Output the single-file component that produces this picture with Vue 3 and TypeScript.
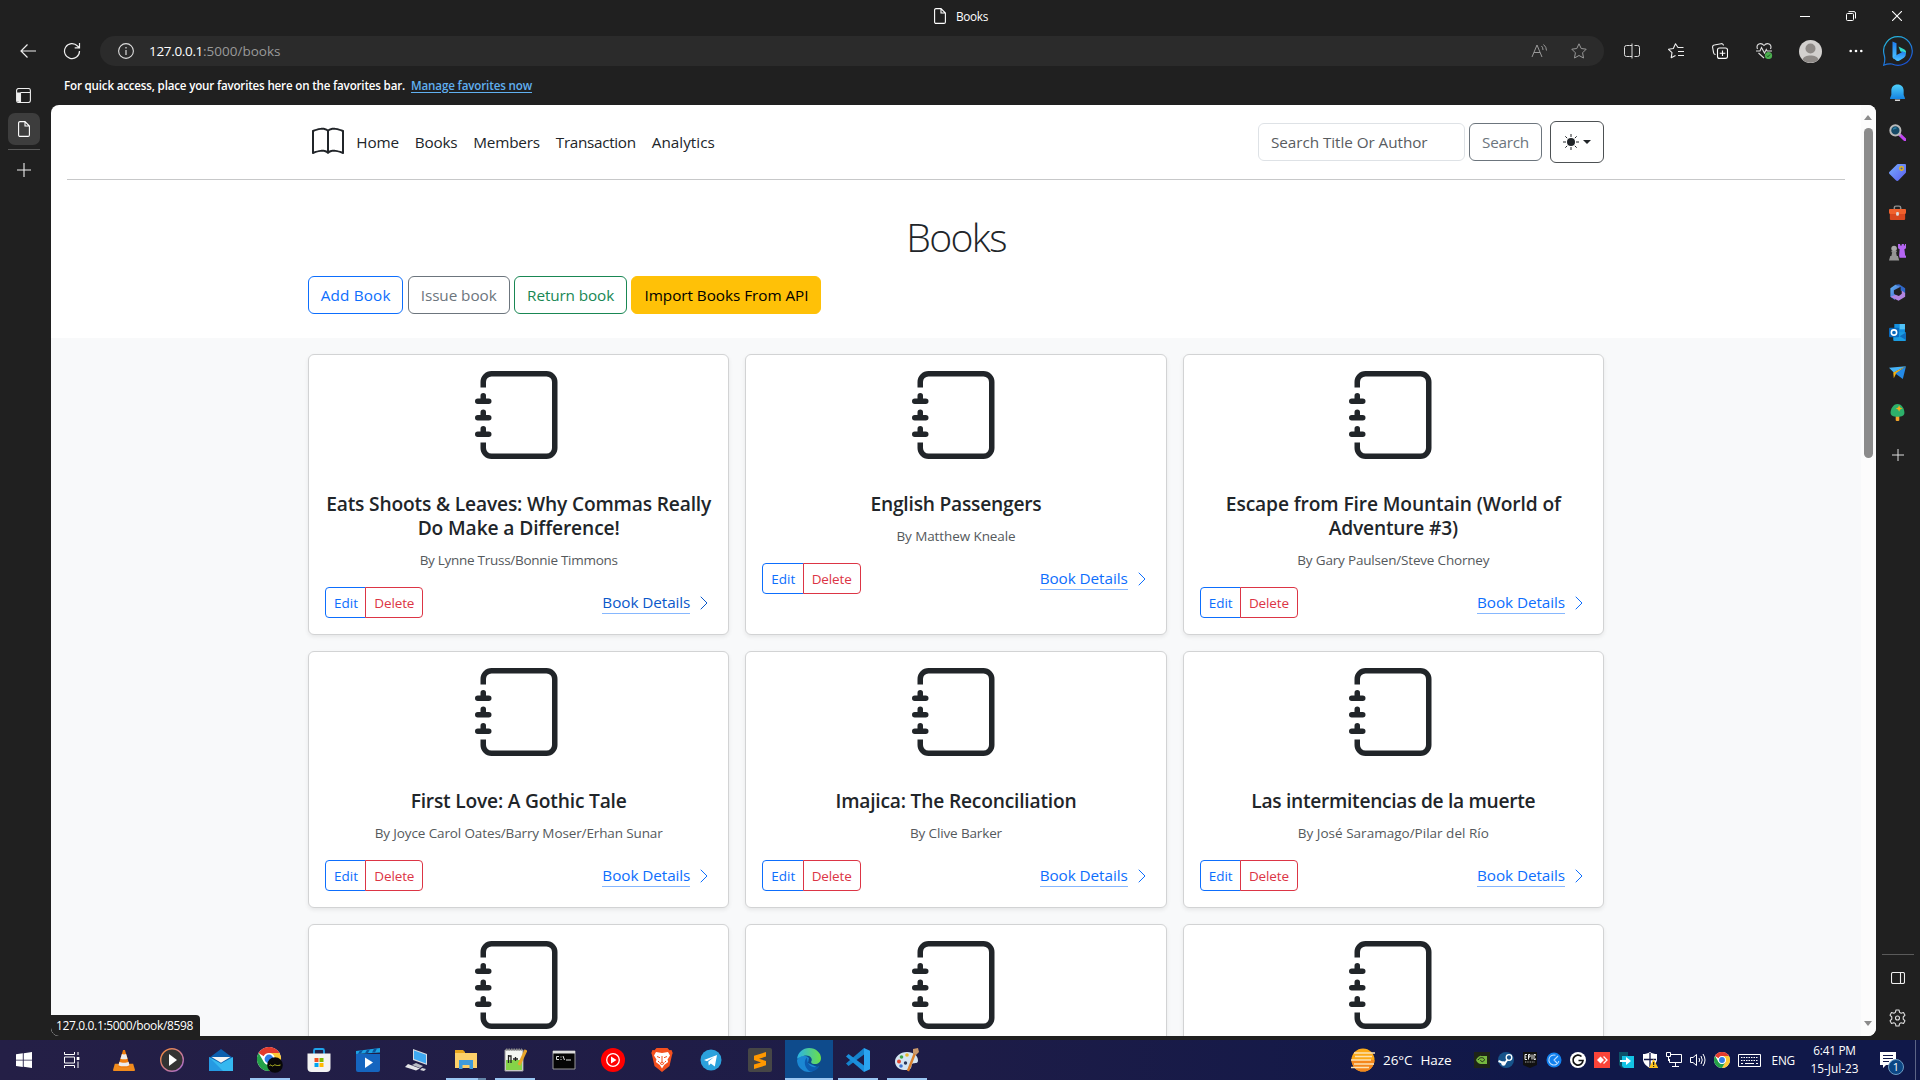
<script setup lang="ts">
interface Book {
  title: [string, number][]
  author: string
  authorWidth: number
  hovered?: boolean
}

interface Glyph {
  name: string
  box: string
  size: number
  state?: string
}

// Spreads the letters of a label so that it takes exactly the given width.
const vFit = {
  mounted(el: HTMLElement, binding: { value: number }) {
    const range = document.createRange()
    range.selectNodeContents(el)
    const natural = range.getBoundingClientRect().width
    const count = (el.textContent ?? '').length
    el.style.letterSpacing = `${(binding.value - natural) / count}px`
  },
}

const books: Book[] = [
  {
    title: [['Eats Shoots & Leaves: Why Commas Really', 385], ['Do Make a Difference!', 202]],
    author: 'By Lynne Truss/Bonnie Timmons',
    authorWidth: 198,
    hovered: true,
  },
  { title: [['English Passengers', 171]], author: 'By Matthew Kneale', authorWidth: 119 },
  {
    title: [['Escape from Fire Mountain (World of', 335], ['Adventure #3)', 129]],
    author: 'By Gary Paulsen/Steve Chorney',
    authorWidth: 192,
  },
  { title: [['First Love: A Gothic Tale', 216]], author: 'By Joyce Carol Oates/Barry Moser/Erhan Sunar', authorWidth: 288 },
  { title: [['Imajica: The Reconciliation', 241]], author: 'By Clive Barker', authorWidth: 92 },
  { title: [['Las intermitencias de la muerte', 284]], author: 'By José Saramago/Pilar del Río', authorWidth: 191 },
]

// Cards below the fold, of which only the cover is in view.
const partialCards = 3

const navLinks: [string, number][] = [
  ['Home', 42.5],
  ['Books', 42.5],
  ['Members', 66.5],
  ['Transaction', 80],
  ['Analytics', 63],
]

const chromeLogo =
  '<circle cx="12" cy="12" r="12" fill="#fff"/><path d="M1.6 6A12 12 0 0 1 22.4 6H12a6 6 0 0 0-5.3 3.2z" fill="#e33b2e"/><path d="M22.4 6A12 12 0 0 1 12 24l5.2-9A6 6 0 0 0 12 6z" fill="#fcc934"/><path d="M1.6 6A12 12 0 0 0 12 24l5.2-9A6 6 0 0 1 6.8 15z" fill="#24a148"/><circle cx="12" cy="12" r="5.6" fill="#fff"/><circle cx="12" cy="12" r="4.4" fill="#2f7de9"/>'

const icons: Record<string, string> = {
  bell: '<defs><linearGradient id="bl" x2="0" y2="1"><stop stop-color="#4fd0fb"/><stop offset="1" stop-color="#1583e0"/></linearGradient></defs><path d="M5.500 14.500h5a2.500 2.500 0 0 1-5 0z" fill="#d8d8d8"/><path d="M8 .5c-3.600 0-5.800 2.500-5.800 5.600v4.200L1 13.200V14h14v-.8l-1.200-2.900V6.100C13.800 3 11.600.5 8 .5z" fill="url(#bl)"/>',
  magnifier: '<path d="M10 10l5 4.800" stroke="#c044f0" stroke-width="3" stroke-linecap="round"/><path d="M9.500 9.500l1.500 1.500" stroke="#aaa" stroke-width="1.500"/><circle cx="6" cy="6" r="4.800" fill="#164a66" stroke="#b9b9b9" stroke-width="1.800"/><path d="M4 5a2.500 2.500 0 0 1 3-1" stroke="#2c83ad" stroke-width="1.300" fill="none"/>',
  tag: '<defs><linearGradient id="tg" y2="1"><stop stop-color="#77aefc"/><stop offset="1" stop-color="#5a5cf0"/></linearGradient></defs><path d="M8.500 0H15a1 1 0 0 1 1 1v6.500a2 2 0 0 1-.6 1.300l-6.600 6.700a1.500 1.500 0 0 1-2.100 0L.5 9.300a1.500 1.500 0 0 1 0-2.100L7.200.6A2 2 0 0 1 8.500 0z" fill="url(#tg)"/><circle cx="11.800" cy="4.200" r="2.300" fill="#e8b710"/><circle cx="11.800" cy="4.200" r="1" fill="#4059c4"/>',
  toolbox: '<path d="M5 5V3.500A1.500 1.500 0 0 1 6.500 2h3A1.500 1.500 0 0 1 11 3.500V5" fill="none" stroke="#8f8f8f" stroke-width="1.400"/><path d="M.8 9h14.400v5a1 1 0 0 1-1 1H1.800a1 1 0 0 1-1-1z" fill="#d9481f"/><path d="M.8 4.800h14.400a.8.8 0 0 1 .8.800v2.400c0 1-.8 1.400-1.600 1.400H1.600C.8 9.400 0 9 0 8V5.600a.8.8 0 0 1 .8-.8z" fill="#f0612d"/><rect x="6.700" y="7.500" width="2.600" height="3.500" rx="1" fill="#ddd"/>',
  chess: '<circle cx="4.800" cy="4.300" r="2.600" fill="#a8a8a8"/><path d="M2.300 6.300h5v1.500H6.600l.9 4H2.100l.9-4h-.7zM1.200 11.300h7.200l1.200 4.200H0z" fill="#949494"/><path d="M8.500 0h2v1.500h1.500V0h2v1.500h1V0h1v4l-1.500 1 .7 5.500 1 1V13H10L9.500 11 10 5 8.500 4z" fill="#b565f3"/>',
  office: '<defs><linearGradient id="of" y2="1"><stop stop-color="#5fb8f5"/><stop offset="1" stop-color="#4453c9"/></linearGradient></defs><path d="M6 .8 9.500.3 15.200 4v5l-4.200-3V3z" fill="#2e66c8"/><path d="M6 .8 1.300 4v8l4.300 3 .8-4.500L4.600 9V5.800L11 2.500z" fill="url(#of)"/><path d="M15.200 8.500V12L9 15.700 1.300 12l5-2 3 1.200 2.700-2V6z" fill="#b185e0"/>',
  outlook: '<path d="M5 0h10v9H5z" fill="#1490df"/><path d="M10 0h5v5h-5z" fill="#50c2f7"/><path d="M4 7l12 1v7a1 1 0 0 1-1 1H5a1 1 0 0 1-1-1z" fill="#1b9de2"/><path d="M16 8v7l-6-3.500z" fill="#0e6dbd"/><rect y="3.500" width="9.500" height="9" rx="1" fill="#0869bd"/><circle cx="4.700" cy="8" r="2.500" fill="none" stroke="#fff" stroke-width="1.500"/>',
  plane: '<path d="M0 3.500 16 2 4.500 8z" fill="#46b3f7"/><path d="M16 2 4 8l.5 5.500 2-4z" fill="#f6b211"/><path d="M16 2 6 9l7 5z" fill="#2389e6"/>',
  tree: '<rect x="6.300" y="11" width="3.400" height="5" rx="1" fill="#f2a52b"/><path d="M8 0c4 0 6.500 4.500 6.500 8.300 0 2.700-2 3.700-6.500 3.700s-6.500-1-6.500-3.700C1.500 4.500 4 0 8 0z" fill="#2db06b"/><path d="m9.500 1.200.9 2.200 2.200.9-2.200.9-.9 2.200-.9-2.200-2.200-.9 2.200-.9z" fill="#f7ad1d"/>',
  // taskbar
  windows: '<path d="M0 2.300 6.800 1.300V7.700H0zM7.700 1.200 16 0v7.700H7.700zM0 8.600h6.800V15L0 14zM7.700 8.600H16V16l-8.300-1.200z" fill="#fff"/>',
  taskview: '<g fill="none" stroke="#fff" stroke-width="1"><path d="M.5 0v2.500h10V0M.5 16v-2.500h10V16M.5 5h10v6H.5zM14 0v3M14 9.500V16"/></g><path d="M12.700 5h2.700v3h-2.700z" fill="#fff"/>',
  vlc: '<path d="M2 16h20l2 7a1 1 0 0 1-1 1H1a1 1 0 0 1-1-1z" fill="#f18b1c"/><path d="M11 1h2l5.500 18c-2 2-11 2-13 0z" fill="#f07d0c"/><path d="m9.700 5.500-1.600 5c2 1 5.800 1 7.800 0l-1.600-5c-1 .6-3.600.6-4.600 0zM7 14l-1 3.600c3 1.700 9 1.700 12 0L17 14c-2.500 1.500-7.500 1.500-10 0z" fill="#ececec"/>',
  media: '<defs><linearGradient id="md" y2="1"><stop stop-color="#f58b34"/><stop offset="1" stop-color="#a56bd8"/></linearGradient></defs><circle cx="12" cy="12" r="11.300" fill="#333" stroke="url(#md)" stroke-width="1.400"/><path d="m9 6 8 6-8 6z" fill="#fff"/>',
  mail: '<path d="m0 10 12-9 12 9v5H0z" fill="#0c5fae"/><path d="M0 9 12 15.500 24 9v14H0z" fill="#35b8f0"/><path d="M0 9 14 23H0z" fill="#1a86d8" opacity=".6"/><path d="M2.500 9h19L12 14.800z" fill="#f4f4f4"/>',
  chrome: chromeLogo + '<circle cx="18" cy="18" r="7.800" fill="#080808"/><path d="M12.500 18.500q1-1 2 0t2 0 2-.5 2 .5 3-.5" stroke="#c4c926" fill="none"/>',
  chromeSmall: chromeLogo,
  store: '<path d="M7 6V2.500A1.500 1.500 0 0 1 8.500 1h7A1.500 1.500 0 0 1 17 2.500V6" fill="none" stroke="#1fa3ea" stroke-width="1.800"/><path d="M.5 5.500h23V20a4 4 0 0 1-4 4h-15a4 4 0 0 1-4-4z" fill="#f3f3f3"/><path d="M7.500 10h4v4h-4z" fill="#f25022"/><path d="M12.500 10h4v4h-4z" fill="#7fba00"/><path d="M7.500 15h4v4h-4z" fill="#00a4ef"/><path d="M12.500 15h4v4h-4z" fill="#ffb900"/>',
  movies: '<path d="M0 6h24v16a2 2 0 0 1-2 2H2a2 2 0 0 1-2-2z" fill="#1565bf"/><path d="M0 3 24 0v4.500L0 6z" fill="#1ca2e4"/><path d="m4 2.500 3-.4-2 3.500-3 .2zM11 1.700l3-.4-2 3.700-3 .2zM18 .8l3-.4-2 4-3 .2z" fill="#0c549d"/><path d="m9 9.500 8 5-8 5.500z" fill="#fff"/>',
  desktop: '<path d="m8 1 14 5v11L8 12z" fill="#d8dbe0"/><path d="m9 2.500 12 4.300v8.700L9 11z" fill="#3fa9f1"/><path d="m11 15 7 3-3 2-8-3z" fill="#b9bcc2"/><path d="m3 16 12 4.500-4 2L0 19z" fill="#e5e6e9"/><path d="m17 20 4 1-2 2-4-1z" fill="#d4d6da"/>',
  explorer: '<path d="M1 2h8l2 2v4H1z" fill="#e9a61c"/><path d="M1 5h22v15H1z" fill="#fdd069"/><path d="M5 12h14v9h-3.500v-4h-7v4H5z" fill="#3f9bdc"/>',
  notepadpp: '<path d="M2 2h18v21H2z" fill="#f5f7f3" stroke="#999"/><path d="M3 12h16v10H3z" fill="#85d348"/><path d="M3 1.500h16" stroke="#888" stroke-width="2" stroke-dasharray="1.500 1"/><path d="M5.500 7v8M5.500 8H8v7M10 11h5M12.500 9v4" stroke="#222" stroke-width="1.300" fill="none"/><path d="m23 2-7 15" stroke="#e8a629" stroke-width="3"/>',
  cmd: '<path d="M1 3h22v18H1z" fill="#050505" stroke="#999"/><path d="M1 3h22v2.500H1z" fill="#ddd"/><path d="M7 8.500H4.500v3H7M9 8.500v1M9 11v1M11 8l1.500 4M14 12h5" stroke="#ddd" fill="none"/>',
  ytmusic: '<circle cx="12" cy="12" r="12" fill="#f00"/><circle cx="12" cy="12" r="6.300" fill="none" stroke="#fff" stroke-width="1.300"/><path d="m10 8.500 5.500 3.500-5.500 3.500z" fill="#fff"/>',
  brave: '<path d="M6.500 0h11l2 2.200 2-.3 1.200 3-.7 2-2.500 11L12 24l-7.500-6.100L2 7l-.7-2 1.200-3 2 .3z" fill="#f4501e"/><path d="m6 4 6 1 6-1 2 3.500-2.500 4 .7 2.500-4 3L12 20.500 9.800 17l-4-3 .7-2.500L4 7.500z" fill="#fff"/><path d="m7 8.500 3 1.200M17 8.500l-3 1.200M12 8v6l-2 1.500 2 1 2-1-2-1.500M8 13l1.500 1.500M16 13l-1.500 1.500" stroke="#f4501e" stroke-width="1" fill="none"/>',
  telegram: '<circle cx="12" cy="12" r="10.500" fill="#2ba1dc"/><path d="m5 12 13-5-2.200 11.500-4-3-2 2-.6-3.700L15 9l-7 4.200z" fill="#fff"/>',
  sublime: '<rect width="24" height="24" rx="2" fill="#464646"/><path d="M18 4v4.500l-7 2.200 7 2.300v4.300l-12 3.800v-4.500l7-2.200-7-2.300V7.800z" fill="#ff9800"/>',
  edge: '<defs><linearGradient id="ed" x1="0" y1=".5" x2="1" y2=".5"><stop stop-color="#2bb2e8"/><stop offset="1" stop-color="#6be048"/></linearGradient></defs><path d="M0 12c2-4 8-6 12-2l-1 5 9 4c-2 3-5 5-8 5A12 12 0 0 1 0 12z" fill="#1b87d3"/><path d="M0 11C1 4 6 0 12 0c7 0 12 5 12 10 0 4-3 6-6 6-3.500 0-4.500-1.500-3.500-3 1.200-2-1-5.500-5-5.500C5 7.500 1 10 0 11z" fill="url(#ed)"/><path d="M10 9.500c-4 3-2.500 12 4 14.300 4-.5 7-3 8.500-6-6 3.500-12.500.5-12.500-8.300z" fill="#0d5cb0"/>',
  vscode: '<path d="m18 0 6 2.700v18.600L18 24z" fill="#2aa4f0"/><path d="M18 0 0 15.500 2.500 18 18 6.500z" fill="#1583cd"/><path d="M18 24 0 8.500 2.500 6 18 17.500z" fill="#1b8fdc"/>',
  paint: '<path d="M12 4c7 0 11 4 11 8.500 0 3-3 2.500-5 3s-1 2.500-2 4.500-4 2-7 2C4 22 0 18 0 13.500S5 4 12 4z" fill="#d4e5f2"/><circle cx="6.500" cy="9" r="1.800" fill="#3da648"/><circle cx="12" cy="7" r="1.800" fill="#e9b72c"/><circle cx="4" cy="13.500" r="2" fill="#e2472f"/><circle cx="6" cy="18" r="1.800" fill="#3d73cf"/><circle cx="10.500" cy="15" r="1.700" fill="#26375b"/><path d="m20 5-7 18" stroke="#d9802c" stroke-width="2.400"/><path d="m18 1 5-1 1 4-3 3-3-2z" fill="#c9986b"/>',
  weather: '<circle cx="12" cy="12" r="11.500" fill="#fba919"/><path d="M12 23.500A11.500 11.500 0 0 1 .5 12h23A11.500 11.500 0 0 1 12 23.500z" fill="#f5871c"/><path d="M3 5h21M0 12h20M4 8.500h17M3 16h20M0 19.500h18" stroke="#fbe2b2" stroke-width="1.500"/>',
  nvidia: '<path d="M0 0h16v16H0z" fill="#1d2418"/><path d="M2 8c2-3.500 4-4 5-4.200V4h6v8H7C5 12 3 10.500 2 8z" fill="#76b83f"/><path d="M4 8c1.500-3 5.500-3 6.500-.5C9.500 10.500 7 10 6.500 8" stroke="#1d2418" fill="none"/>',
  steam: '<circle cx="8" cy="8" r="8" fill="#16538a"/><path d="M.5 9l6 2.500L10 7" stroke="#fff" stroke-width="2" fill="none"/><circle cx="11" cy="5.500" r="2.800" fill="#16538a" stroke="#fff" stroke-width="1.300"/><circle cx="5.500" cy="11.500" r="2.200" fill="#fff"/>',
  epic: '<path d="M1 0h14v13l-7 3-7-3z" fill="#111"/><path d="M5 2.500H3v5h2M3 5h1.500M6.500 7.500v-5h1.500v2.500H6.500M10 2.500v5M13.500 3.500v-1H12v5h1.500v-1" stroke="#eee" fill="none"/><path d="M3 10h10" stroke="#aaa" stroke-dasharray="1 .7"/>',
  clock: '<circle cx="8" cy="8" r="7.500" fill="#1180ee"/><path d="M9.500 3.300a5 5 0 1 0 3.300 5.700M12 4 8 8l3 3" fill="none" stroke="#bcdcff" stroke-width="1.100"/>',
  logi: '<circle cx="8" cy="8" r="8" fill="#fff"/><path d="M11.500 4.500A5 5 0 1 0 13 8.500H8.500" fill="none" stroke="#111" stroke-width="1.700"/>',
  anydesk: '<path d="M0 0h16v16H0z" fill="#fb4439"/><path d="m3 8 3.500-3.500L10 8l-3.500 3.500z" fill="#fff"/><path d="m9.500 4.500 3.500 3.500-3.500 3.500" stroke="#fff" stroke-width="1.300" fill="none"/>',
  transfer: '<path d="M1 0h9v16H4L1 13z" fill="#0b5168"/><path d="M4 4h12v12H6l-2-2z" fill="#13c3e4"/><path d="M2 8h6V5l5 4-5 4v-3H2z" fill="#fff"/>',
  shield: '<path d="M8 0c2 1.500 4.500 2 7 2v5c0 4-3 7-7 9-4-2-7-5-7-9V2c2.500 0 5-.5 7-2z" fill="#fff"/><path d="M8 1v14M2 7.500h12" stroke="#13184a" stroke-width="1.300"/><path d="m11.500 7 4.700 9H7z" fill="#fcc21c"/><path d="M11.600 10v3M11.600 14v1" stroke="#222" stroke-width="1.200"/>',
  network: '<g fill="none" stroke="#fff"><path d="M5 2.500h10.500v8H3.500V7M9.500 10.500v3.500M6 14.500h7M.5.5h4v4h-4zM2.500 4.500V9"/></g>',
  speaker: '<g fill="none" stroke="#fff"><path d="M.5 5.500H3l3.500-3v11l-3.500-3H.5zM9 6q1.200 2 0 4M11 4q2.500 4 0 8M13 2q4 6 0 12"/></g>',
  journal: '<path d="M3 0h10a2 2 0 0 1 2 2v12a2 2 0 0 1-2 2H3a2 2 0 0 1-2-2v-1h1v1a1 1 0 0 0 1 1h10a1 1 0 0 0 1-1V2a1 1 0 0 0-1-1H3a1 1 0 0 0-1 1v1H1V2a2 2 0 0 1 2-2z"/><path d="M1 5v-.5a.5.5 0 0 1 1 0V5h.5a.5.5 0 0 1 0 1h-2a.5.5 0 0 1 0-1H1zm0 3v-.5a.5.5 0 0 1 1 0V8h.5a.5.5 0 0 1 0 1h-2a.5.5 0 0 1 0-1H1zm0 3v-.5a.5.5 0 0 1 1 0v.5h.5a.5.5 0 0 1 0 1h-2a.5.5 0 0 1 0-1H1z"/>',
}

const sidebarApps = ['bell', 'magnifier', 'tag', 'toolbox', 'chess', 'office', 'outlook', 'plane', 'tree']

const taskApps: Glyph[] = [
  { name: 'vlc', box: '0 0 24 24', size: 22 },
  { name: 'media', box: '0 0 24 24', size: 24 },
  { name: 'mail', box: '0 0 24 24', size: 24 },
  { name: 'chrome', box: '0 0 26 26', size: 26, state: 'open' },
  { name: 'store', box: '0 0 24 24', size: 24 },
  { name: 'movies', box: '0 0 24 24', size: 24 },
  { name: 'desktop', box: '0 0 24 24', size: 24 },
  { name: 'explorer', box: '0 0 24 24', size: 24, state: 'stacked' },
  { name: 'notepadpp', box: '0 0 24 24', size: 24, state: 'open' },
  { name: 'cmd', box: '0 0 24 24', size: 24 },
  { name: 'ytmusic', box: '0 0 24 24', size: 24 },
  { name: 'brave', box: '0 0 24 24', size: 24 },
  { name: 'telegram', box: '0 0 24 24', size: 24 },
  { name: 'sublime', box: '0 0 24 24', size: 24 },
  { name: 'edge', box: '0 0 24 24', size: 24, state: 'active' },
  { name: 'vscode', box: '0 0 24 24', size: 24, state: 'open' },
  { name: 'paint', box: '0 0 24 24', size: 24, state: 'open' },
]

const trayApps = ['nvidia', 'steam', 'epic', 'clock', 'logi', 'anydesk', 'transfer', 'shield', 'network', 'speaker']
</script>

<template>
  <div class="screen">
    <header class="titlebar">
      <div class="tab-title">
        <svg width="12" height="16" viewBox="0 0 12 16"><path d="M.6 2A1.400 1.400 0 0 1 2 .6h5L11.400 5v9a1.400 1.400 0 0 1-1.400 1.400H2A1.400 1.400 0 0 1 .6 14zM7 .6V5h4.400" fill="none" stroke="#fff" stroke-width="1.100" /></svg>
        <span v-fit="32">Books</span>
      </div>
      <div class="window-buttons">
        <svg width="10" height="10" viewBox="0 0 10 10"><path d="M0 5.500h10" stroke="#fff" /></svg>
        <svg width="10" height="10" viewBox="0 0 10 10"><path d="M.5 3.500a1 1 0 0 1 1-1h5a1 1 0 0 1 1 1v5a1 1 0 0 1-1 1h-5a1 1 0 0 1-1-1zM2.500.6H8A1.500 1.500 0 0 1 9.500 2v5.500" fill="none" stroke="#fff" /></svg>
        <svg width="10" height="10" viewBox="0 0 10 10"><path d="m0 0 10 10M10 0 0 10" stroke="#fff" stroke-width="1.100" /></svg>
      </div>
    </header>

    <div class="toolbar">
      <svg class="back" width="16" height="14" viewBox="0 0 16 14"><path d="M16 7H1M7.500.5 1 7l6.500 6.500" fill="none" stroke="#eee" stroke-width="1.200" /></svg>
      <svg class="reload" width="18" height="18" viewBox="0 0 18 18"><path d="M16.500 9A7.500 7.500 0 1 1 14.500 4L16.200 5.500M16.500 1v4.800h-4.800" fill="none" stroke="#eee" stroke-width="1.200" /></svg>
      <div class="address">
        <svg width="16" height="16" viewBox="0 0 16 16"><circle cx="8" cy="8" r="7.400" fill="none" stroke="#ddd" stroke-width="1.100" /><path d="M8 7v5M8 4v1.400" stroke="#ddd" stroke-width="1.200" /></svg>
        <span v-fit="54" class="host">127.0.0.1</span><span v-fit="77.5" class="path">:5000/books</span>
        <div class="address-tools">
          <svg width="17" height="16" viewBox="0 0 17 16"><path d="M1 14 6 2l5 12M3 9.500h6M10.500 3q1.500 1.500 1.500 4M12.500 1.500q3 2.500 3 6" fill="none" stroke="#999" /></svg>
          <svg width="16" height="16" viewBox="0 0 16 16"><path d="m8 .8 2.200 4.700 5 .7-3.600 3.600.9 5.200L8 12.500 3.500 15l.9-5.200L.8 6.200l5-.7z" fill="none" stroke="#999" stroke-linejoin="round" /></svg>
        </div>
      </div>
      <div class="tools">
        <svg width="16" height="16" viewBox="0 0 16 16"><path d="M5.500 2.500h-3a2 2 0 0 0-2 2v7a2 2 0 0 0 2 2h3M10.500 2.500h3a2 2 0 0 1 2 2v7a2 2 0 0 1-2 2h-3M5.500 2.500H8M5.500 13.500H8M8 .5v15" fill="none" stroke="#ddd" /></svg>
        <svg width="16" height="16" viewBox="0 0 16 16"><path d="M15.500 4.500H10L7.500.8 5.300 5.500l-4.800.8L4 9.700l-.8 5 4.300-2.300M10 8.500h6M10 12.500h6" fill="none" stroke="#eee" stroke-width="1.100" stroke-linejoin="round" /></svg>
        <svg width="16" height="16" viewBox="0 0 16 16"><path d="M11.500 2.500A2 2 0 0 0 9.200.7L2.300 2A2 2 0 0 0 .6 4.400l1 5.400q.4 1.600 2 1.700" fill="none" stroke="#eee" stroke-width="1.100" /><rect x="5.500" y="5" width="10" height="10.400" rx="2" fill="none" stroke="#fff" stroke-width="1.100" /><path d="M10.500 7.500v5.500M7.700 10.200h5.600" stroke="#fff" stroke-width="1.100" /></svg>
        <svg width="17" height="16" viewBox="0 0 17 16"><path d="M1.500 6C-.5 1 5-1 8 2.500 11-1 16.500 1 14.500 6M0 8h4l1.500-3.500L8.500 10l1.800-3.500.8 1.500H16M2.500 10 8 15" fill="none" stroke="#ddd" stroke-width="1.100" /><circle cx="12.500" cy="12.500" r="3.600" fill="#4caf50" /><path d="m11 12.700 1 1 2-2.200" stroke="#14501a" fill="none" /></svg>
        <svg class="avatar" width="23" height="23" viewBox="0 0 23 23"><circle cx="11.500" cy="11.500" r="11.500" fill="#d2d0ce" /><circle cx="11.500" cy="8.500" r="5" fill="#8e8a87" /><path d="M3.500 19.500c1.500-5.500 14.500-5.500 16 0a11.500 11.500 0 0 1-16 0z" fill="#8e8a87" /></svg>
        <svg class="more" width="14" height="4" viewBox="0 0 14 4"><g fill="#fff"><circle cx="1.700" cy="2" r="1.300" /><circle cx="7" cy="2" r="1.300" /><circle cx="12.300" cy="2" r="1.300" /></g></svg>
        <svg class="bing" width="30" height="30" viewBox="0 0 30 30">
          <defs>
            <linearGradient id="ring" x1="0" y1="0" x2=".6" y2="1"><stop stop-color="#27c3dc" /><stop offset="1" stop-color="#1a55d8" /></linearGradient>
            <linearGradient id="bee" x1="0" y1="0" x2="0" y2="1"><stop stop-color="#1e7cf0" /><stop offset="1" stop-color="#4cc5ff" /></linearGradient>
          </defs>
          <path d="M15 .7A14.300 14.300 0 1 1 9 28q-4-.6-8.300 1.200Q2.600 24 1.200 19A14.300 14.300 0 0 1 15 .7z" fill="none" stroke="url(#ring)" stroke-width="1.200" />
          <path d="m9.500 5.500 4 1.700v14l-2.500 2-1.500-2z" fill="url(#bee)" />
          <path d="m15.500 10.500 6 3q2 1 1.500 3.500l-5.500-1.500z" fill="#35dcc9" />
          <path d="m9.700 21.500 3.800 3.300q1.500.6 3-.3l4.500-2.800q2-1.500 2-4.700l-4-2-.5 1.500-5 2.500z" fill="url(#bee)" />
        </svg>
      </div>
    </div>

    <div class="main">
      <aside class="tabs">
        <svg class="tabs-toggle" width="15" height="15" viewBox="0 0 15 15"><path d="M.6 2.500a2 2 0 0 1 2-2h9.800a2 2 0 0 1 2 2v10a2 2 0 0 1-2 2H2.600a2 2 0 0 1-2-2zM4.500 4.500h10M4.500 4.500v10" fill="none" stroke="#eee" stroke-width="1.100" /><path d="M1 4.500h3v10L1 13z" fill="#eee" /></svg>
        <div class="tab">
          <svg width="12" height="16" viewBox="0 0 12 16"><path d="M.6 2A1.400 1.400 0 0 1 2 .6h5L11.400 5v9a1.400 1.400 0 0 1-1.400 1.400H2A1.400 1.400 0 0 1 .6 14zM7 .6V5h4.400" fill="none" stroke="#fff" stroke-width="1.100" /></svg>
        </div>
        <div class="rule"></div>
        <svg class="new-tab" width="14" height="14" viewBox="0 0 14 14"><path d="M7 0v14M0 7h14" stroke="#eee" stroke-width="1.100" /></svg>
      </aside>

      <div class="center">
        <div class="favorites">
          <span v-fit="341">For quick access, place your favorites here on the favorites bar.</span>
          <a v-fit="121">Manage favorites now</a>
        </div>

        <div class="viewport">
          <div class="page">
            <nav class="container navbar">
              <svg class="logo" width="32" height="32" viewBox="0 0 16 16" fill="#212529"><path d="M1 2.828c.885-.37 2.154-.769 3.388-.893 1.330-.134 2.458.063 3.112.752v9.746c-.935-.53-2.120-.603-3.213-.493-1.180.12-2.370.461-3.287.811V2.828zm7.500-.141c.654-.689 1.782-.886 3.112-.752 1.234.124 2.503.523 3.388.893v9.923c-.918-.35-2.107-.692-3.287-.81-1.094-.111-2.278-.039-3.213.492V2.687zM8 1.783C7.015.936 5.587.81 4.287.94c-1.514.153-3.042.672-3.994 1.105A.5.5 0 0 0 0 2.500v11a.5.5 0 0 0 .707.455c.882-.4 2.303-.881 3.680-1.020 1.409-.142 2.590.087 3.223.877a.5.5 0 0 0 .78 0c.633-.79 1.814-1.019 3.222-.877 1.378.139 2.800.62 3.681 1.020A.5.5 0 0 0 16 13.500v-11a.5.5 0 0 0-.293-.455c-.952-.433-2.480-.952-3.994-1.105C10.413.809 8.985.936 8 1.783z" /></svg>
              <a v-for="[label, width] in navLinks" :key="label" v-fit="width" class="nav-link">{{ label }}</a>
              <div class="search">
                <input type="text" placeholder="Search Title Or Author" />
                <button class="btn gray"><span v-fit="47">Search</span></button>
                <button class="btn theme">
                  <svg width="16" height="16" viewBox="0 0 16 16"><circle cx="8" cy="8" r="4" fill="#212529" /><path d="M8 0v3M8 13v3M0 8h3M13 8h3M2.300 2.300l1.900 1.900M11.800 11.800l1.900 1.900M2.300 13.700l1.900-1.900M11.800 4.200l1.900-1.900" stroke="#212529" /></svg>
                  <i></i>
                </button>
              </div>
            </nav>
            <hr />

            <section class="container intro">
              <h1><span v-fit="99.5">Books</span></h1>
              <div class="actions">
                <button class="btn blue"><span v-fit="70">Add Book</span></button>
                <button class="btn gray"><span v-fit="76">Issue book</span></button>
                <button class="btn green"><span v-fit="87">Return book</span></button>
                <button class="btn yellow"><span v-fit="164">Import Books From API</span></button>
              </div>
            </section>

            <section class="shelf">
              <div class="container grid">
                <article v-for="book in books" :key="book.author" class="card">
                  <svg class="cover" width="88" height="88" viewBox="0 0 16 16" fill="#212529" v-html="icons.journal"></svg>
                  <h5>
                    <div v-for="[line, width] in book.title" :key="line"><span v-fit="width">{{ line }}</span></div>
                  </h5>
                  <p><span v-fit="book.authorWidth">{{ book.author }}</span></p>
                  <div class="card-foot">
                    <div class="group">
                      <button class="edit"><span v-fit="24">Edit</span></button>
                      <button class="delete"><span v-fit="40">Delete</span></button>
                    </div>
                    <a class="details" :class="{ hovered: book.hovered }">
                      <span v-fit="88">Book Details</span>
                      <svg width="8" height="14" viewBox="0 0 8 14"><path d="m1 1 6 6-6 6" fill="none" stroke="currentColor" stroke-linecap="round" /></svg>
                    </a>
                  </div>
                </article>
                <article v-for="n in partialCards" :key="n" class="card">
                  <svg class="cover" width="88" height="88" viewBox="0 0 16 16" fill="#212529" v-html="icons.journal"></svg>
                </article>
              </div>
            </section>
          </div>
          <div class="scrollbar">
            <i class="up"></i>
            <div class="thumb"></div>
            <i class="down"></i>
          </div>
          <div class="status"><span v-fit="137">127.0.0.1:5000/book/8598</span></div>
        </div>
      </div>

      <aside class="apps">
        <div v-for="name in sidebarApps" :key="name" class="app">
          <svg width="17" height="17" viewBox="0 0 16 16" v-html="icons[name]"></svg>
        </div>
        <svg class="add" width="12" height="12" viewBox="0 0 12 12"><path d="M6 0v12M0 6h12" stroke="#ddd" /></svg>
        <div class="rule"></div>
        <svg class="panel" width="14" height="12" viewBox="0 0 14 12"><path d="M.5 2A1.500 1.500 0 0 1 2 .5h10A1.500 1.500 0 0 1 13.500 2v8a1.500 1.500 0 0 1-1.500 1.500H2A1.500 1.500 0 0 1 .5 10zM9.500.5v11" fill="none" stroke="#eee" stroke-width="1.100" /></svg>
        <svg class="settings" width="17" height="18" viewBox="0 0 17 18"><path d="M7 1h3l.6 2.400 1.500.9 2.400-.8 1.500 2.700L14.200 8v2l1.800 1.800-1.500 2.700-2.400-.8-1.500.9L10 17H7l-.6-2.400-1.500-.9-2.400.8L1 11.800 2.800 10V8L1 6.200l1.500-2.700 2.400.8 1.500-.9z" fill="none" stroke="#ddd" stroke-width="1.100" stroke-linejoin="round" /><circle cx="8.500" cy="9" r="2" fill="none" stroke="#ddd" stroke-width="1.100" /></svg>
      </aside>
    </div>

    <footer class="taskbar">
      <div class="task start"><svg width="16" height="16" viewBox="0 0 16 16" v-html="icons.windows"></svg></div>
      <div class="task view"><svg width="16" height="16" viewBox="0 0 16 16" v-html="icons.taskview"></svg></div>
      <div v-for="app in taskApps" :key="app.name" class="task" :class="app.state">
        <svg :width="app.size" :height="app.size" :viewBox="app.box" v-html="icons[app.name]"></svg>
      </div>
      <div class="tray">
        <svg class="weather" width="24" height="24" viewBox="0 0 24 24" v-html="icons.weather"></svg>
        <span v-fit="29.500" class="temp">26°C</span>
        <span v-fit="31" class="sky">Haze</span>
        <svg v-for="name in trayApps" :key="name" class="tray-icon" width="16" height="16" viewBox="0 0 16 16" v-html="icons[name]"></svg>
        <svg class="tray-icon" width="16" height="16" viewBox="0 0 24 24" v-html="icons.chromeSmall"></svg>
        <svg class="keyboard" width="23" height="13" viewBox="0 0 23 13"><path d="M.5.5h22v12H.5z" fill="none" stroke="#fff" /><path d="M3 3.500h17M3 6.500h17" stroke="#fff" stroke-dasharray="1.500 1" /><path d="M3 9.500h2M7 9.500h9M18 9.500h2" stroke="#fff" /></svg>
        <span v-fit="23.500" class="lang">ENG</span>
        <div class="clock">
          <span v-fit="42.500">6:41 PM</span>
          <span v-fit="48">15-Jul-23</span>
        </div>
        <div class="notice">
          <svg width="16" height="16" viewBox="0 0 16 16"><path d="M0 0h16v13H6l-3 3v-3H0z" fill="#fff" /><path d="M3 3.500h10M3 6.500h10M3 9.500h6" stroke="#10184a" /></svg>
          <b>1</b>
        </div>
      </div>
    </footer>
  </div>
</template>

<style>
body {
  margin: 0;
  overflow: hidden;
  background: #202020;
}
</style>

<style scoped>
.screen {
  display: flex;
  flex-direction: column;
  width: 1920px;
  height: 1080px;
  overflow: hidden;
  background: #202020;
  color: #fff;
  font-family: 'Open Sans', 'Noto Sans', sans-serif;
  font-size: 15.3px;
}
.screen * {
  box-sizing: border-box;
}
svg {
  display: block;
  flex: none;
}
span,
a {
  white-space: nowrap;
}
button,
input {
  font: inherit;
  margin: 0;
}

/* browser frame */
.titlebar {
  display: flex;
  flex: none;
  height: 36px;
  padding: 0 18px 4px 934px;
  align-items: center;
  justify-content: space-between;
}
.tab-title {
  display: flex;
  align-items: center;
  gap: 10px;
  font-size: 11.800px;
}
.window-buttons {
  display: flex;
  gap: 36px;
}
.toolbar {
  display: flex;
  flex: none;
  height: 30px;
  align-items: center;
}
.back {
  margin-left: 20px;
}
.reload {
  margin-left: 27px;
}
.address {
  display: flex;
  width: 1504px;
  height: 30px;
  margin-left: 19px;
  padding: 0 17px 0 18px;
  align-items: center;
  border-radius: 15px;
  background: #2b2b2b;
  font-size: 13.500px;
}
.host {
  margin-left: 15px;
}
.path {
  color: #9a9a9a;
}
.address-tools {
  display: flex;
  margin-left: auto;
  gap: 23px;
}
.tools {
  display: flex;
  padding-left: 20px;
  align-items: center;
  gap: 28px;
}
.avatar {
  margin-left: -2px;
}
.more {
  margin-left: -1px;
}
.bing {
  margin-left: -8px;
}
.main {
  display: flex;
  flex: none;
  height: 974px;
}
.tabs {
  display: flex;
  flex: none;
  width: 51px;
  flex-direction: column;
  align-items: center;
  padding-right: 4px;
}
.tabs-toggle {
  margin: 22px 1px 0 0;
}
.tab {
  display: flex;
  width: 32px;
  height: 32px;
  margin-top: 10px;
  align-items: center;
  justify-content: center;
  border-radius: 7px;
  background: #3d3d3d;
}
.rule {
  width: 32px;
  height: 1px;
  background: #5a5a5a;
}
.tabs .rule {
  margin-top: 4px;
}
.new-tab {
  margin-top: 13px;
}
.center {
  display: flex;
  width: 1825px;
  flex-direction: column;
}
.favorites {
  display: flex;
  flex: none;
  height: 39px;
  padding: 0 0 0 13px;
  align-items: center;
  gap: 6px;
  font-size: 11.600px;
  font-weight: 600;
  line-height: 18px;
}
.favorites a {
  color: #60b0f0;
  text-decoration: underline;
  text-underline-offset: 2px;
}
.viewport {
  position: relative;
  display: flex;
  height: 931px;
  overflow: hidden;
  border-radius: 8px;
  background: #fff;
}
.scrollbar {
  display: flex;
  width: 15px;
  flex-direction: column;
  align-items: center;
  background: #fcfcfc;
  padding: 10px 1px 10px 0;
}
.up,
.down {
  width: 0;
  height: 0;
  border: 4.5px solid transparent;
}
.up {
  border-top: 0;
  border-bottom: 5px solid #8b8b8b;
}
.down {
  margin-top: auto;
  border-bottom: 0;
  border-top: 5px solid #8b8b8b;
}
.thumb {
  width: 9px;
  height: 330px;
  margin-top: 8px;
  border-radius: 5px;
  background: #8b8b8b;
}
.status {
  position: absolute;
  left: 0;
  bottom: 0;
  display: flex;
  width: 149px;
  height: 21px;
  padding: 0 0 1px 5px;
  align-items: center;
  border-radius: 0 4px 0 0;
  background: #202020;
  font-size: 12px;
}

/* page */
.page {
  width: 1810px;
  color: #212529;
}
.container {
  width: 1296px;
  margin: 0 auto;
}
.navbar {
  display: flex;
  height: 74px;
  align-items: center;
}
.logo {
  margin: 0 12.300px 0 4px;
}
.nav-link {
  margin-right: 16px;
}
.search {
  display: flex;
  margin-left: auto;
  align-items: center;
}
.search input {
  width: 207px;
  height: 38px;
  margin-right: 4px;
  padding: 0 12px;
  border: 1px solid #dee2e6;
  border-radius: 6px;
  outline: 0;
  letter-spacing: -0.07px;
}
.search input::placeholder {
  color: #595c5f;
  opacity: 1;
}
.btn {
  display: flex;
  height: 38px;
  padding: 0 12px;
  align-items: center;
  justify-content: center;
  border: 1px solid;
  border-radius: 6px;
  background: #fff;
}
.search .gray {
  width: 73px;
}
.theme {
  width: 54px;
  height: 42px;
  margin-left: 8px;
  gap: 4px;
  border-color: #4d5154;
  color: #212529;
}
.theme i {
  border: 4.5px solid transparent;
  border-top-color: #212529;
  border-bottom: 0;
}
.gray {
  color: #6c757d;
}
.blue {
  width: 95.300px;
  color: #0d6efd;
}
.green {
  color: #198754;
}
.yellow {
  border-color: #ffc107;
  background: #ffc107;
  color: #000;
}
hr {
  height: 1px;
  margin: 0 16px;
  border: 0;
  background: #c7c8c9;
}
.intro {
  height: 158px;
}
h1 {
  display: flex;
  height: 96px;
  margin: 0;
  padding-top: 33px;
  justify-content: center;
  font-size: 39.200px;
  font-weight: 300;
  line-height: 48px;
}
.actions {
  display: flex;
  gap: 4.400px;
}
.shelf {
  height: 900px;
  background: #f8f9fa;
  padding-top: 16px;
}
.grid {
  display: grid;
  grid-template-columns: repeat(3, 1fr);
  grid-template-rows: 281px 257px 257px;
  gap: 16px;
}
.card {
  padding: 16px;
  border: 1px solid #d2d3d4;
  border-radius: 6px;
  background: #fff;
  box-shadow: 0 2px 4px rgba(0, 0, 0, 0.075);
  text-align: center;
}
.cover {
  margin: 0 auto;
}
h5 {
  margin: 33px 0 10px;
  font-size: 19.200px;
  font-weight: 600;
  line-height: 24px;
}
p {
  margin: 0 0 16px;
  color: #55595c;
  font-size: 13.500px;
  line-height: 21px;
}
.card-foot {
  display: flex;
  height: 31px;
  align-items: center;
  justify-content: space-between;
}
.group {
  display: flex;
}
.group button {
  height: 31px;
  padding: 0 8px;
  border: 1px solid;
  background: #fff;
  font-size: 13.500px;
}
.edit {
  width: 41.300px;
  border-radius: 4px 0 0 4px;
  color: #0d6efd;
}
.group .delete {
  width: 58px;
  margin-left: -1px;
  border-radius: 0 4px 4px 0;
  color: #dc3545;
}
.details {
  display: flex;
  padding-right: 4px;
  align-items: center;
  gap: 10px;
  color: #0d6efd;
}
.details span {
  height: 23px;
  border-bottom: 1px solid #86b7fe;
  line-height: 23px;
}
.hovered {
  color: #0a58ca;
}

/* edge sidebar */
.apps {
  display: flex;
  flex: none;
  width: 44px;
  flex-direction: column;
  align-items: center;
  padding: 6px 1px 0 0;
}
.app {
  display: flex;
  flex: none;
  height: 40px;
  align-items: center;
}
.add {
  margin: 17px 0 auto;
}
.panel {
  margin: 17px 0 25px;
}
.settings {
  margin-bottom: 13px;
}

/* taskbar */
.taskbar {
  display: flex;
  height: 40px;
  background: linear-gradient(90deg, #241f46, #1d1c47 50%, #101849 80%);
}
.task {
  display: flex;
  flex: none;
  width: 48px;
  height: 40px;
  margin-right: 0.940px;
  align-items: center;
  justify-content: center;
}
.start {
  margin: 0;
}
.view {
  margin-right: 3.500px;
}
.open {
  background: linear-gradient(#9ac6f2, #9ac6f2) 50% 100% / 40px 2px no-repeat;
}
.stacked {
  background:
    linear-gradient(#9ac6f2, #9ac6f2) 4px 100% / 32px 2px no-repeat,
    linear-gradient(#6485a8, #6485a8) 36px 100% / 8px 2px no-repeat;
}
.active {
  background: linear-gradient(#9ac6f2, #9ac6f2) 0 100% / 48px 2px no-repeat #0e4b8c;
}
.tray {
  display: flex;
  flex: 1;
  margin-left: auto;
  align-items: center;
  justify-content: flex-end;
  font-size: 13.500px;
}
.temp {
  margin: 0 8px;
}
.sky {
  margin-right: 22px;
}
.tray-icon {
  margin-right: 8px;
}
.keyboard {
  margin-right: 11px;
}
.lang {
  font-size: 11.800px;
}
.clock {
  display: flex;
  width: 49px;
  flex-direction: column;
  align-items: center;
  margin: 0 21px 0 15px;
  padding-bottom: 2px;
  font-size: 11.800px;
  line-height: 18px;
}
.notice {
  position: relative;
  width: 36px;
  border-right: 1px solid #5c6486;
  height: 40px;
  padding-top: 12px;
  margin-right: 4px;
}
.notice b {
  position: absolute;
  left: 8px;
  top: 19px;
  width: 16px;
  height: 16px;
  border: 1px solid #6e9cc4;
  border-radius: 50%;
  background: #0b4684;
  font-size: 11px;
  font-weight: 400;
  line-height: 14px;
  text-align: center;
}
</style>
